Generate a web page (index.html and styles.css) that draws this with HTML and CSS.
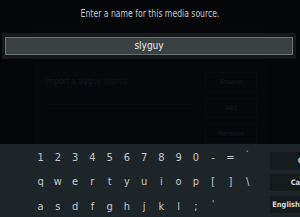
FILE: index.html
```html
<!DOCTYPE html>
<html>
<head>
<meta charset="utf-8">
<link rel="stylesheet" href="styles.css">
</head>
<body>
<div class="screen">
  <div class="title"><span class="title-text">Enter a name for this media source.</span></div>
  <div class="stage">
    <div class="backdrop">
      <div class="bd-left">
        <div class="bd-label">Import a slyguy source</div>
        <div class="bd-line"></div>
      </div>
      <div class="bd-right">
        <div class="bd-btn">Browse</div>
        <div class="bd-btn">Add</div>
        <div class="bd-btn">Remove</div>
      </div>
    </div>
    <div class="input-halo">
      <div class="input">slyguy</div>
    </div>
  </div>
  <div class="keyboard">
    <div class="keys">
      <span>1</span><span>2</span><span>3</span><span>4</span><span>5</span><span>6</span><span>7</span><span>8</span><span>9</span><span>0</span><span>-</span><span>=</span><span class="tick">`</span>
      <span>q</span><span>w</span><span>e</span><span>r</span><span>t</span><span>y</span><span>u</span><span>i</span><span>o</span><span>p</span><span>[</span><span>]</span><span>\</span>
      <span>a</span><span>s</span><span>d</span><span>f</span><span>g</span><span>h</span><span>j</span><span>k</span><span>l</span><span>;</span><span class="tick">'</span>
    </div>
    <div class="actions">
      <div class="act">OK</div>
      <div class="act">Cancel</div>
      <div class="act">English QWERTY</div>
    </div>
  </div>
</div>
</body>
</html>
```
FILE: styles.css
```css
html, body {
  margin: 0;
  padding: 0;
  background: #050608;
}
.screen {
  width: 300px;
  height: 217px;
  overflow: hidden;
  display: flex;
  flex-direction: column;
  font-family: "DejaVu Sans Condensed", "Roboto", sans-serif;
}
.title {
  height: 30px;
  line-height: 28px;
  text-align: center;
  color: #c4c6c8;
  font-size: 11px;
}
.title-text {
  display: inline-block;
  transform: scaleX(0.78);
}
.stage {
  position: relative;
  height: 116px;
}
.backdrop {
  margin: 0 35px 0 33px;
  height: 116px;
  background: #07080b;
  display: flex;
  padding: 40px 8px 0 12px;
  box-sizing: border-box;
}
.bd-left {
  flex: 1;
}
.bd-label {
  color: #15171b;
  font-size: 8px;
  margin-top: 9px;
}
.bd-line {
  margin-top: 18px;
  height: 1px;
  background: #0b0c0f;
  width: 150px;
}
.bd-right {
  width: 52px;
  display: flex;
  flex-direction: column;
  gap: 6px;
  padding-top: 4px;
}
.bd-btn {
  height: 18px;
  line-height: 18px;
  text-align: center;
  color: #17191d;
  font-size: 7px;
  border: 1px solid #0a0b0e;
}
.input-halo {
  position: absolute;
  left: 2px;
  right: 4px;
  top: 5px;
  padding: 4px 3px;
  background: #15181a;
}
.input {
  height: 16px;
  line-height: 16px;
  border: 1px solid #6a6f71;
  background: #3b4043;
  color: #eceeef;
  text-align: center;
  font-size: 10px;
}
.keyboard {
  flex: 1;
  background: #1e2528;
  display: flex;
  padding-top: 1px;
}
.keys {
  margin-left: 32px;
  display: grid;
  grid-template-columns: repeat(13, 17.25px);
  grid-auto-rows: 24.5px;
  color: #c2c7c9;
  font-size: 11px;
}
.keys span {
  display: flex;
  align-items: center;
  justify-content: center;
}
.keys .tick {
  align-items: flex-start;
  padding-top: 5px;
  font-size: 9px;
}
.actions {
  margin-left: 14px;
  width: 66px;
  flex-shrink: 0;
  display: flex;
  flex-direction: column;
  gap: 5px;
  padding-top: 7px;
}
.act {
  height: 17px;
  line-height: 17px;
  background: #151a1c;
  color: #d6d9da;
  font-size: 7.5px;
  font-weight: bold;
  text-align: center;
  white-space: nowrap;
}
```
